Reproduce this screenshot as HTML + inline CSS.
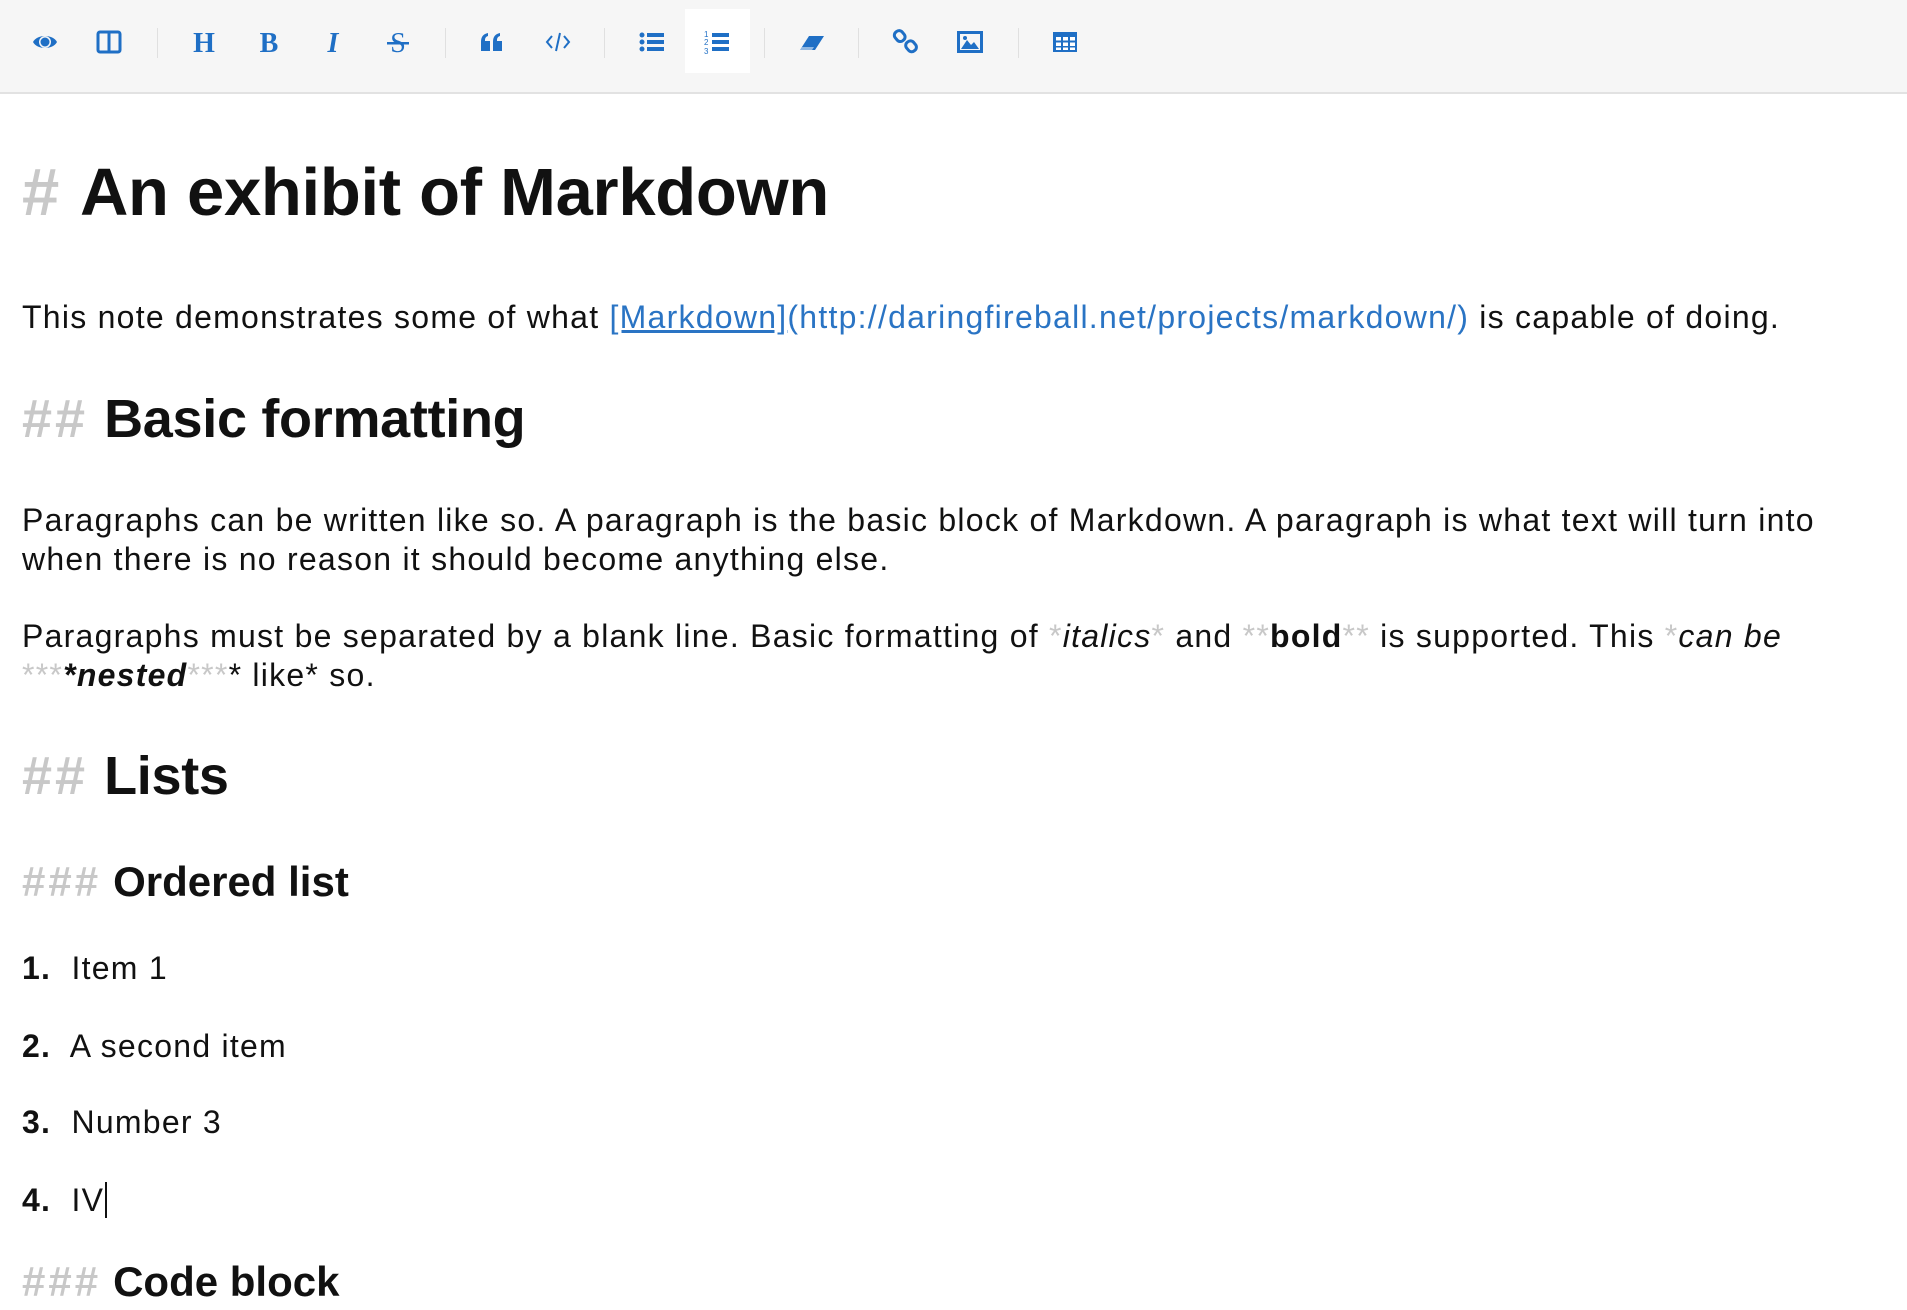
<!DOCTYPE html>
<html><head><meta charset="utf-8"><style>
*{margin:0;padding:0;box-sizing:border-box}
body{width:1907px;height:1310px;background:#fff;font-family:"Liberation Sans",sans-serif;color:#111;position:relative;overflow:hidden}
.tb{position:absolute;left:0;top:0;width:1907px;height:94px;background:#f6f6f6;border-bottom:2px solid #e2e2e2}
.ic{position:absolute;top:28px;width:28px;height:28px}
.sep{position:absolute;top:28px;width:1px;height:30px;background:#e0e0e0}
.act{position:absolute;left:685px;top:9px;width:65px;height:64px;background:#fff}
.l{position:absolute;left:22px;white-space:nowrap;line-height:1}
.p{font-size:32px;letter-spacing:1.25px}
.h1{font-size:67px;font-weight:bold;letter-spacing:-0.3px}
.h2{font-size:54px;font-weight:bold;letter-spacing:-0.3px}
.h3{font-size:42px;font-weight:bold}
.g{color:#c8c8c8}
.h1 .g{margin-right:21px}
.h2 .g{letter-spacing:3px;margin-right:16px}
.h3 .g{letter-spacing:3px;margin-right:12px}
.lk{color:#2a74c4}
.b{font-weight:bold}
</style></head><body>
<div class="tb">
<div class="act"></div>
<svg class="ic" style="left:31px" viewBox="0 0 28 28" fill="#1f6fc5"><path d="M2 14C6 6 22 6 26 14C22 22 6 22 2 14Z"/><circle cx="14" cy="14" r="6" fill="#f6f6f6"/><circle cx="14" cy="14" r="4.5"/></svg>
<svg class="ic" style="left:95px" viewBox="0 0 28 28" fill="none" stroke="#1f6fc5" stroke-width="3"><rect x="3" y="4" width="22" height="20" rx="2"/><path d="M14 4V24"/></svg>
<div class="sep" style="left:157px"></div>
<svg class="ic" style="left:190px" viewBox="0 0 28 28"><text x="14" y="24" text-anchor="middle" font-family="Liberation Serif" font-weight="bold" font-size="28" fill="#1f6fc5">H</text></svg>
<svg class="ic" style="left:255px" viewBox="0 0 28 28"><text x="14" y="24" text-anchor="middle" font-family="Liberation Serif" font-weight="bold" font-size="28" fill="#1f6fc5">B</text></svg>
<svg class="ic" style="left:319px" viewBox="0 0 28 28"><text x="14" y="24" text-anchor="middle" font-family="Liberation Serif" font-style="italic" font-weight="bold" font-size="28" fill="#1f6fc5">I</text></svg>
<svg class="ic" style="left:384px" viewBox="0 0 28 28"><text x="14" y="24" text-anchor="middle" font-family="Liberation Serif" font-size="28" fill="#1f6fc5">S</text><rect x="3" y="14" width="22" height="2.5" fill="#1f6fc5"/></svg>
<div class="sep" style="left:445px"></div>
<svg class="ic" style="left:478px" viewBox="0 0 28 28" fill="#1f6fc5"><path d="M3 14C3 9 5 6 10 5V8C7 9 7 11 7 13H12V23H3Z"/><path d="M15 14C15 9 17 6 22 5V8C19 9 19 11 19 13H24V23H15Z"/></svg>
<svg class="ic" style="left:544px" viewBox="0 0 28 28" fill="none" stroke="#1f6fc5" stroke-width="2"><path d="M8 8L3 14L8 20M20 8L25 14L20 20M16 5L12 23"/></svg>
<div class="sep" style="left:604px"></div>
<svg class="ic" style="left:638px" viewBox="0 0 28 28" fill="#1f6fc5"><circle cx="4" cy="7" r="2.5"/><circle cx="4" cy="14" r="2.5"/><circle cx="4" cy="21" r="2.5"/><rect x="9" y="5" width="17" height="4"/><rect x="9" y="12" width="17" height="4"/><rect x="9" y="19" width="17" height="4"/></svg>
<svg class="ic" style="left:703px" viewBox="0 0 28 28" fill="#1f6fc5"><text x="1" y="9" font-size="8" font-family="Liberation Sans">1</text><text x="1" y="17" font-size="8" font-family="Liberation Sans">2</text><text x="1" y="26" font-size="8" font-family="Liberation Sans">3</text><rect x="9" y="5" width="17" height="4"/><rect x="9" y="12" width="17" height="4"/><rect x="9" y="19" width="17" height="4"/></svg>
<div class="sep" style="left:764px"></div>
<svg class="ic" style="left:797px" viewBox="0 0 28 28" fill="#1f6fc5"><path d="M12 8H27L18 22H3Z"/><path d="M5 19L3 22H15L17 19Z" fill="#fff" opacity=".5"/></svg>
<div class="sep" style="left:858px"></div>
<svg class="ic" style="left:892px" viewBox="0 0 28 28" fill="none" stroke="#1f6fc5" stroke-width="3"><rect x="3" y="3" width="9" height="11" rx="4" transform="rotate(-40 7 8)"/><rect x="15" y="13" width="9" height="11" rx="4" transform="rotate(-40 19 19)"/></svg>
<svg class="ic" style="left:956px" viewBox="0 0 28 28"><rect x="2.5" y="4.5" width="23" height="19" fill="none" stroke="#1f6fc5" stroke-width="3"/><path d="M5 21L11 12L15 17L18 14L23 21Z" fill="#1f6fc5"/><circle cx="9" cy="10" r="2" fill="#1f6fc5"/></svg>
<div class="sep" style="left:1018px"></div>
<svg class="ic" style="left:1051px" viewBox="0 0 28 28"><rect x="2" y="4" width="24" height="20" fill="#1f6fc5"/><g fill="#fff"><rect x="5" y="9" width="5" height="3.5"/><rect x="12" y="9" width="5" height="3.5"/><rect x="19" y="9" width="5" height="3.5"/><rect x="5" y="14.5" width="5" height="3.5"/><rect x="12" y="14.5" width="5" height="3.5"/><rect x="19" y="14.5" width="5" height="3.5"/><rect x="5" y="19.5" width="5" height="2.5"/><rect x="12" y="19.5" width="5" height="2.5"/><rect x="19" y="19.5" width="5" height="2.5"/></g></svg>
</div>

<div class="l h1" style="top:159px"><span class="g">#</span>An exhibit of Markdown</div>
<div class="l p" style="top:301px">This note demonstrates some of what <span class="lk"><u>[Markdown]</u>(http://daringfireball.net/projects/markdown/)</span> is capable of doing.</div>
<div class="l h2" style="top:392px"><span class="g">##</span>Basic formatting</div>
<div class="l p" style="top:504px">Paragraphs can be written like so. A paragraph is the basic block of Markdown. A paragraph is what text will turn into</div>
<div class="l p" style="top:543px">when there is no reason it should become anything else.</div>
<div class="l p" style="top:620px">Paragraphs must be separated by a blank line. Basic formatting of <span class="g">*</span><i>italics</i><span class="g">*</span> and <span class="g">**</span><b>bold</b><span class="g">**</span> is supported. This <span class="g">*</span><i>can be</i></div>
<div class="l p" style="top:659px"><span class="g">***</span><b><i>*nested</i></b><span class="g">***</span>* like* so.</div>
<div class="l h2" style="top:749px"><span class="g">##</span>Lists</div>
<div class="l h3" style="top:861px"><span class="g">###</span>Ordered list</div>
<div class="l p" style="top:952px"><b>1.</b>&nbsp; Item 1</div>
<div class="l p" style="top:1030px"><b>2.</b>&nbsp; A second item</div>
<div class="l p" style="top:1106px"><b>3.</b>&nbsp; Number 3</div>
<div class="l p" style="top:1184px"><b>4.</b>&nbsp; IV<span style="border-left:2px solid #111;margin-left:1px"></span></div>
<div class="l h3" style="top:1261px"><span class="g">###</span>Code block</div>
</body></html>
